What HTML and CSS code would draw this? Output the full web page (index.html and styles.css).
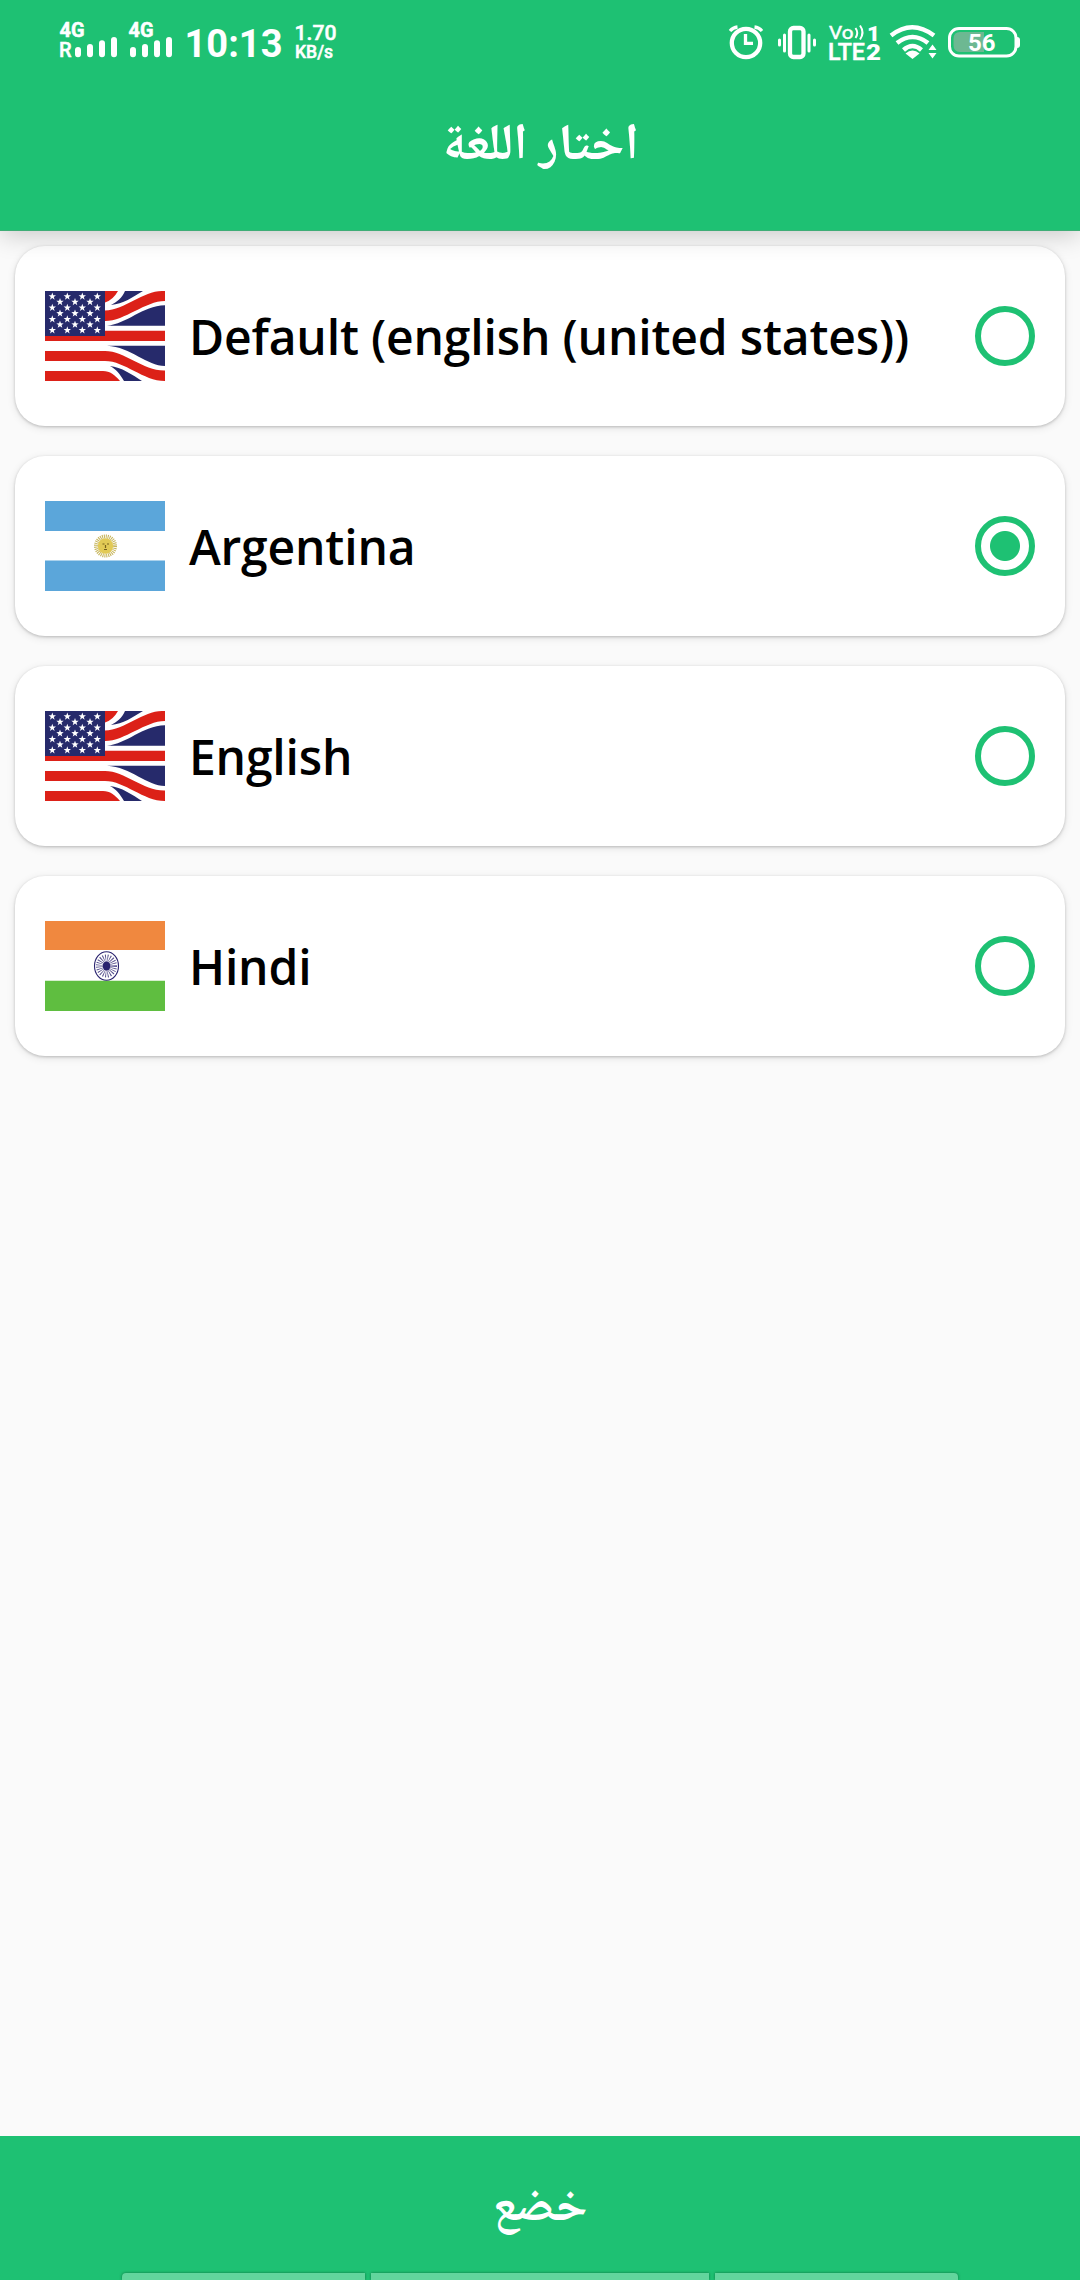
FILE: index.html
```html
<!DOCTYPE html>
<html lang="ar">
<head>
<meta charset="utf-8">
<title>اختار اللغة</title>
<link rel="stylesheet" href="styles.css">
</head>
<body>
<svg class="defs" width="0" height="0">
  <defs>
    <path id="star" d="M0-3.9 .95-1.3 3.7-1.2 1.5.5 2.3 3.2 0 1.6-2.3 3.2-1.5.5-3.7-1.2-.95-1.3Z" fill="#fff"/>
    <g id="star-row"><use href="#star" x="7.3"/><use href="#star" x="22.3"/><use href="#star" x="37.3"/><use href="#star" x="52.3"/></g>
    <g id="star-row-inner"><use href="#star" x="15"/><use href="#star" x="30"/><use href="#star" x="45"/></g>
    <symbol id="flag-en" viewBox="0 0 120 90">
      <path fill="#fff" d="M0 0H120V90H0Z"/>
      <path fill="#dc2118" d="M0 45H60V39.7H120V50H0ZM0 60H60C80 60 98 80 120 79.5V90C98 90 80 70 60 70H0ZM0 80H58C65 80 70 84 75 90H0ZM60 0H73Q68 9 60 11.5ZM60 19.5C80 19 98 0 117 0H120V10C100 10 80 30 60 30Z"/>
      <path fill="#262a6b" d="M62 34.7C82 33 97 15 120 14.3V34.7ZM66 14C72 11 77 7 80 0H98C88 6 78 13 66 14ZM62 54.7H120V75C102 75 86 56 62 54.7ZM65 75C76 76 88 84 97 90H79C75 83 71 78 65 75Z"/>
      <path fill="#262a6b" d="M0 0H60V45H0Z"/>
      <use href="#star-row" y="5.5"/><use href="#star-row" y="16.7"/><use href="#star-row" y="28.2"/><use href="#star-row" y="39.2"/>
      <use href="#star-row-inner" y="11"/><use href="#star-row-inner" y="22.4"/><use href="#star-row-inner" y="33.6"/>
    </symbol>
  </defs>
</svg>

<header class="header">
  <div class="status">
    <svg class="sim" width="59" height="42" viewBox="60 20 59 42">
      <text class="heavy" x="59.500" y="36.7" font-size="19.500" font-weight="700" textLength="25" lengthAdjust="spacingAndGlyphs">4G</text>
      <text class="heavy" x="59" y="57" font-size="20" font-weight="500">R</text>
      <path class="bars" d="M78 50V54.2M90 47V54.2M102 43.3V54.2M114 40V54.2"/>
    </svg>
    <svg class="sim-second" width="46" height="42" viewBox="129 20 46 42">
      <text class="heavy" x="128.500" y="36.7" font-size="19.500" font-weight="700" textLength="25" lengthAdjust="spacingAndGlyphs">4G</text>
      <path class="bars" d="M133 50V54.2M145 47V54.2M157 43.3V54.2M169 40V54.2"/>
    </svg>
    <svg class="clock" width="102" height="42" viewBox="183 20 102 42">
      <text x="184.5" y="57" font-size="38.5" font-weight="700" textLength="98" lengthAdjust="spacingAndGlyphs">10:13</text>
    </svg>
    <svg class="speed" width="46" height="42" viewBox="293 20 46 42">
      <text class="heavy" x="294.5" y="40" font-size="21" font-weight="500" textLength="42" lengthAdjust="spacingAndGlyphs">1.70</text>
      <text class="heavy" x="295" y="58" font-size="17.5" font-weight="500" textLength="38" lengthAdjust="spacingAndGlyphs">KB/s</text>
    </svg>
    <span class="spacer"></span>
    <svg class="status-icons" width="295" height="42" viewBox="727 20 295 42">
      <g class="line" stroke-width="4.3">
        <circle cx="746" cy="43" r="14.2"/>
        <path stroke-width="3.3" d="M745.5 34V43.3H753M730 31Q733 27.5 737.5 27M762 31Q759 27.5 754.500 27"/>
        <rect x="790" y="28" width="13.5" height="29" rx="3.5"/>
        <path stroke-width="3" stroke-linecap="round" d="M784.500 35V51M779.500 40V45M809 35V51M814.500 40V45"/>
      </g>
      <text class="heavy" x="829" y="38.500" font-size="19" font-weight="400" textLength="24.500" lengthAdjust="spacingAndGlyphs">Vo</text>
      <path class="line" stroke-width="2" d="M855.5 28Q859 33 855.5 38M860 25.500Q865 32.500 860 39.500"/>
      <text x="867" y="40.500" font-size="21" font-weight="900" textLength="13" lengthAdjust="spacingAndGlyphs">1</text>
      <text class="heavy" x="828" y="60" font-size="23" font-weight="500" textLength="37" lengthAdjust="spacingAndGlyphs">LTE</text>
      <text x="866" y="60" font-size="22.500" font-weight="900" textLength="15" lengthAdjust="spacingAndGlyphs">2</text>
      <path class="line" stroke-width="4.500" d="M891 35.500Q912 19 934 35.500M897 43Q912.500 31 928 43M903.500 50Q912.500 42 921.500 50"/>
      <path d="M905.500 53.500Q912.500 47.500 919.500 53.500L912.500 59Z"/>
      <path d="M928.500 50 932.500 44.500 936.500 50ZM928.500 53H936.500L932.500 58.500Z"/>
      <path fill="#6db892" d="M960 32H984V52H960Q953.500 52 953.500 45V39Q953.500 32 960 32Z"/>
      <rect class="line" stroke-width="3" x="949.500" y="28.500" width="66.500" height="27.500" rx="9.500"/>
      <path d="M1017 37Q1020 37 1020 40V45Q1020 48 1017 48Z"/>
      <text x="968" y="50.500" font-size="24" font-weight="700" textLength="27.500" lengthAdjust="spacingAndGlyphs">56</text>
    </svg>
  </div>
  <h1 class="title" dir="rtl"><span class="arabic">اختار اللغة</span></h1>
</header>

<main class="list">
  <label class="card">
    <svg class="flag" viewBox="0 0 120 90"><use href="#flag-en"/></svg>
    <span class="name">Default (english (united states))</span>
    <span class="radio"></span>
  </label>
  <label class="card">
    <svg class="flag" viewBox="0 0 120 90">
      <path fill="#fff" d="M0 0H120V90H0Z"/>
      <path fill="#5ba6da" d="M0 0H120V30H0ZM0 59.500H120V90H0Z"/>
      <circle cx="60.500" cy="45" r="9.500" fill="none" stroke="#c6b45a" stroke-width="4" stroke-dasharray="1 .865"/>
      <circle cx="60.500" cy="45" r="7.700" fill="#e2ca55"/>
      <path fill="none" stroke="#78621c" stroke-width="1.200" d="M57.500 43H59.500M62 43H64M60.500 44V47M59 48.500H62"/>
    </svg>
    <span class="name">Argentina</span>
    <span class="radio radio-on"></span>
  </label>
  <label class="card">
    <svg class="flag" viewBox="0 0 120 90"><use href="#flag-en"/></svg>
    <span class="name">English</span>
    <span class="radio"></span>
  </label>
  <label class="card">
    <svg class="flag" viewBox="0 0 120 90">
      <path fill="#fff" d="M0 0H120V90H0Z"/>
      <path fill="#f0883f" d="M0 0H120V29H0Z"/>
      <path fill="#5fbe40" d="M0 59.700H120V90H0Z"/>
      <g fill="none" stroke="#29226f">
        <ellipse cx="61.500" cy="45" rx="12" ry="14.300" stroke-width="1.100"/>
        <ellipse cx="61.500" cy="45" rx="5.500" ry="6.500" stroke-width="10" stroke-dasharray=".6 .97" opacity=".8"/>
      </g>
      <ellipse cx="61.500" cy="45" rx="3.800" ry="4.600" fill="#29226f"/>
    </svg>
    <span class="name">Hindi</span>
    <span class="radio"></span>
  </label>
</main>

<footer class="submit">
  <div class="submit-label" dir="rtl"><span class="arabic">خضع</span></div>
  <div class="keys"><i class="key"></i><i class="key key-wide"></i><i class="key"></i></div>
</footer>
</body>
</html>
```
FILE: styles.css
```css
* { box-sizing: border-box; }

body {
  margin: 0;
  height: 2280px;
  display: flex;
  flex-direction: column;
  background: #fafafa;
  font-family: "Open Sans", "Noto Sans", sans-serif;
  overflow: hidden;
}

.defs { position: absolute; }

.header {
  position: relative;
  z-index: 1;
  height: 231px;
  flex: none;
  background: #1ec173;
  color: #fff;
  border-bottom: 1px solid #3fad77;
  box-shadow: 0 4px 24px rgba(0, 0, 0, .2);
}

.status {
  display: flex;
  height: 82px;
  padding: 20px 58px 0 60px;
  font-family: Roboto, sans-serif;
}

.status svg { flex: none; fill: #fff; overflow: visible; }
.sim-second { margin-left: 10px; }
.clock, .speed { margin-left: 8px; }
.spacer { flex: 1; }
.heavy { stroke: #fff; stroke-width: .5; }
.bars { stroke: #fff; stroke-width: 6; stroke-linecap: round; }
.line { fill: none; stroke: #fff; }

.title {
  margin: 0;
  height: 126px;
  padding: 5px 0 0 2px;
  display: flex;
  justify-content: center;
  align-items: center;
  font-size: 51px;
  line-height: 60px;
  font-weight: 700;
}

.arabic {
  display: block;
  white-space: nowrap;
  font-family: "Noto Naskh Arabic", "DejaVu Sans", sans-serif;
}

.list {
  flex: 1;
  display: flex;
  flex-direction: column;
  gap: 30px;
  padding: 15px;
}

.card {
  display: flex;
  align-items: center;
  height: 180px;
  padding: 0 30px;
  border-radius: 30px;
  background: #fff;
  box-shadow: 0 1px 3px rgba(0, 0, 0, .2), 0 2px 8px rgba(0, 0, 0, .1);
}

.flag { width: 120px; height: 90px; flex: none; }

.name {
  flex: 1;
  padding: 2px 0 0 24px;
  color: #000;
  font-size: 48px;
  line-height: 66px;
  font-weight: 600;
  letter-spacing: -.17px;
  white-space: nowrap;
}

.radio {
  width: 60px;
  height: 60px;
  flex: none;
  border: 6px solid #1ec173;
  border-radius: 50%;
}

.radio-on { background: radial-gradient(circle, #1ec173 14.5px, transparent 15.5px); }

.submit {
  height: 144px;
  flex: none;
  display: flex;
  flex-direction: column;
  background: #1ec173;
  color: #fff;
}

.submit-label {
  flex: 1;
  padding-top: 10px;
  display: flex;
  justify-content: center;
  align-items: center;
  font-size: 48px;
  line-height: 60px;
  font-weight: 700;
}

.keys { display: flex; justify-content: center; gap: 6px; height: 7px; }
.key {
  width: 243px;
  background: #62d59d;
  border-radius: 4px 0 0 0;
  box-shadow: 0 0 3px rgba(0, 60, 30, .6);
}
.key:last-child { border-radius: 0 4px 0 0; }
.key-wide { width: 338px; border-radius: 0; }
```
